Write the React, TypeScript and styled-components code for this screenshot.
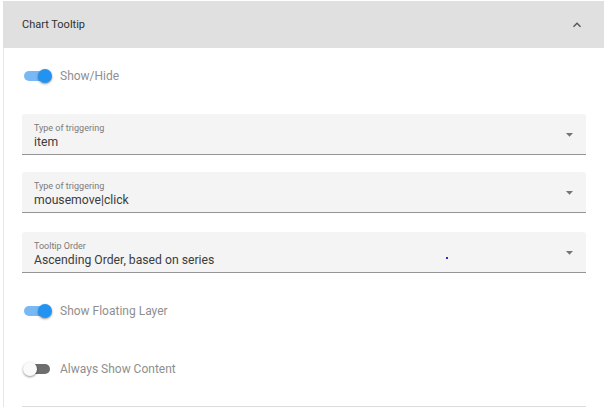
import React from "react";
import styled, { createGlobalStyle } from "styled-components";

const Global = createGlobalStyle`
  html, body { margin: 0; padding: 0; background: #ffffff; overflow: hidden; }
  body { font-family: Roboto, "Liberation Sans", sans-serif; }
`;

const Panel = styled.section`
  margin: 1px 0 0 3px;
  border-left: 1px solid #e6e6e6;
  background: #fff;
`;

const Header = styled.header`
  height: 47px;
  background: #e0e0e0;
  display: flex;
  align-items: center;
  justify-content: space-between;
  padding: 0 19px 0 18px;
  margin-left: -1px;
`;

const Title = styled.span`
  font-size: 11px;
  color: #303030;
  margin-left: 1px;
`;

const Content = styled.div`
  display: flex;
  flex-direction: column;
  padding: 0 18px 0 18px;
`;

const SwitchRow = styled.label<{ $top: number }>`
  display: flex;
  align-items: center;
  height: 24px;
  margin-top: ${(p) => p.$top}px;
`;

const SwitchRoot = styled.span`
  position: relative;
  width: 30px;
  height: 14px;
  margin-left: 1px;
  flex: none;
`;

const Track = styled.span<{ $on: boolean }>`
  position: absolute;
  left: 1px;
  top: 2px;
  width: 26px;
  height: 10px;
  border-radius: 5px;
  background: ${(p) => (p.$on ? "#78b9f5" : "#6e6e6e")};
`;

const Thumb = styled.span<{ $on: boolean }>`
  position: absolute;
  top: 0;
  left: ${(p) => (p.$on ? "15px" : "0")};
  width: 14px;
  height: 14px;
  border-radius: 50%;
  background: ${(p) => (p.$on ? "#2393f2" : "#fafafa")};
  box-shadow: 0 1px 2px rgba(0, 0, 0, 0.3), 0 1px 3px rgba(0, 0, 0, 0.15);
`;

const SwitchLabel = styled.span`
  margin-left: 7px;
  font-size: 12px;
  color: #8f8f8f;
`;

const Field = styled.div<{ $top: number }>`
  position: relative;
  height: 40px;
  margin-top: ${(p) => p.$top}px;
  background: #f4f4f4;
  border-bottom: 1px solid #949494;
  border-radius: 3px 3px 0 0;
  display: flex;
  align-items: center;
  padding: 0 8px 0 12px;
`;

const FieldText = styled.div`
  flex: 1;
  display: flex;
  flex-direction: column;
  padding-top: 4px;
`;

const FieldLabel = styled.span`
  font-size: 9px;
  line-height: 11px;
  color: #7a7a7a;
`;

const FieldValue = styled.span`
  font-size: 12.2px;
  line-height: 16px;
  color: #3c3c3c;
`;

const Dot = styled.span`
  position: absolute;
  left: 424px;
  top: 25px;
  width: 2px;
  height: 2px;
  background: #2a2ad0;
`;

const Divider = styled.div`
  height: 2px;
  margin-top: 25px;
  background: #dcdcdc;
`;

const ChevronUp = () => (
  <svg width="16" height="16" viewBox="0 0 24 24" fill="#555">
    <path d="M12 8l-6 6 1.41 1.41L12 10.83l4.59 4.58L18 14z" />
  </svg>
);

const ArrowDown = () => (
  <svg width="17" height="17" viewBox="0 0 24 24" fill="#757575">
    <path d="M7 10l5 5 5-5z" />
  </svg>
);

const Toggle = ({ on, label, top }: { on: boolean; label: string; top: number }) => (
  <SwitchRow $top={top}>
    <SwitchRoot>
      <Track $on={on} />
      <Thumb $on={on} />
    </SwitchRoot>
    <SwitchLabel>{label}</SwitchLabel>
  </SwitchRow>
);

const Select = ({ label, value, top, dot }: { label: string; value: string; top: number; dot?: boolean }) => (
  <Field $top={top}>
    <FieldText>
      <FieldLabel>{label}</FieldLabel>
      <FieldValue>{value}</FieldValue>
    </FieldText>
    <ArrowDown />
    {dot && <Dot />}
  </Field>
);

export default function App() {
  return (
    <>
      <Global />
      <Panel>
        <Header>
          <Title>Chart Tooltip</Title>
          <ChevronUp />
        </Header>
        <Content>
          <Toggle on label="Show/Hide" top={16} />
          <Select label="Type of triggering" value="item" top={26} />
          <Select label="Type of triggering" value="mousemove|click" top={17} />
          <Select label="Tooltip Order" value="Ascending Order, based on series" top={19} dot />
          <Toggle on label="Show Floating Layer" top={26} />
          <Toggle on={false} label="Always Show Content" top={34} />
          <Divider />
        </Content>
      </Panel>
    </>
  );
}
